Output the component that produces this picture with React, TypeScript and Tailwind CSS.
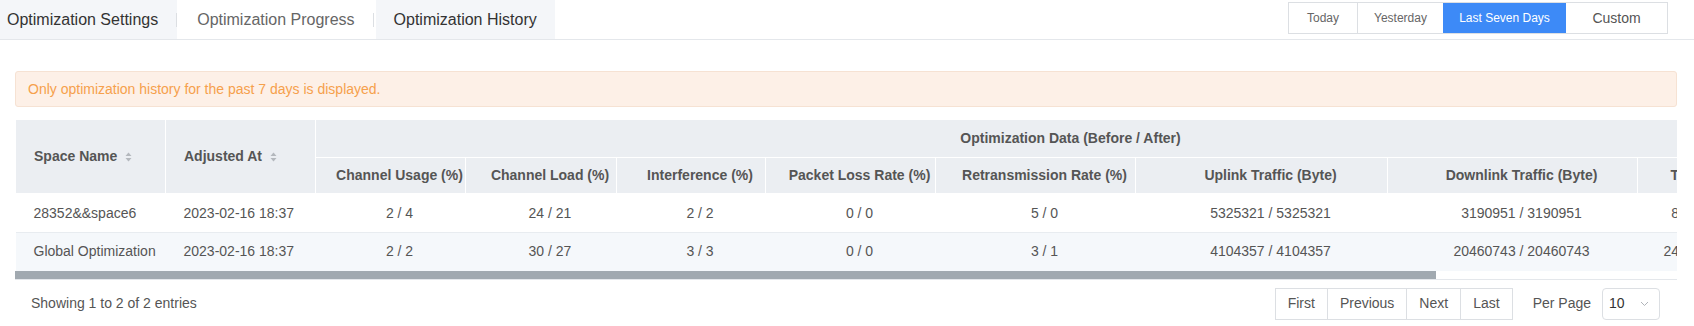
import React from "react";

const SortIcon = () => (
  <svg width="7" height="10" viewBox="0 0 7 10" className="inline-block ml-[8px] align-[-1px]">
    <path d="M3.5 0.5 L6.5 4 L0.5 4 Z" fill="#b4b8bd" />
    <path d="M3.5 9.5 L6.5 6 L0.5 6 Z" fill="#b4b8bd" />
  </svg>
);

const subCols = [
  "Channel Usage (%)",
  "Channel Load (%)",
  "Interference (%)",
  "Packet Loss Rate (%)",
  "Retransmission Rate (%)",
  "Uplink Traffic (Byte)",
  "Downlink Traffic (Byte)",
  "Total Traffic (Byte)",
];

const rows = [
  {
    name: "28352&&space6",
    time: "2023-02-16 18:37",
    vals: ["2 / 4", "24 / 21", "2 / 2", "0 / 0", "5 / 0", "5325321 / 5325321", "3190951 / 3190951", "8516272 / 8516272"],
  },
  {
    name: "Global Optimization",
    time: "2023-02-16 18:37",
    vals: ["2 / 2", "30 / 27", "3 / 3", "0 / 0", "3 / 1", "4104357 / 4104357", "20460743 / 20460743", "24565100 / 24565100"],
  },
];

export default function App() {
  return (
    <div className="w-[1694px] h-[326px] bg-white overflow-hidden" style={{ fontFamily: '"Liberation Sans", Arial, sans-serif' }}>
      {/* top bar */}
      <div className="flex justify-between items-start h-[40px] border-b border-[#e4e7eb] pr-[26px]">
        <div className="flex h-[39px]">
          <div className="flex items-center bg-[#f4f6f9] pl-[7px] text-[16px] text-[#333]">
            <span>Optimization Settings</span>
            <span className="ml-[18px] w-px h-[14px] bg-[#dcdfe3]" />
          </div>
          <div className="flex items-center bg-white pl-[20px] text-[16px] text-[#666]">
            <span>Optimization Progress</span>
            <span className="ml-[18px] mr-[2px] w-px h-[14px] bg-[#dcdfe3]" />
          </div>
          <div className="flex items-center bg-[#f4f6f9] px-[18px] text-[16px] text-[#333]">
            <span>Optimization History</span>
          </div>
        </div>
        <div className="flex mt-[2px] h-[32px] border border-[#dcdfe3]">
          <div className="w-[69px] flex items-center justify-center text-[12px] text-[#666] border-r border-[#dcdfe3]">Today</div>
          <div className="w-[85px] flex items-center justify-center text-[12px] text-[#666]">Yesterday</div>
          <div className="w-[123px] flex items-center justify-center text-[12px] text-white bg-[#3d8af7]">Last Seven Days</div>
          <div className="w-[101px] flex items-center justify-center text-[14px] text-[#555]">Custom</div>
        </div>
      </div>

      <div className="pl-[15px] pr-[17px]">
        {/* alert */}
        <div className="mt-[31px] h-[36px] flex items-center pl-[12px] bg-[#fdf0e7] border border-[#f6e2d3] rounded-[3px] text-[14px] text-[#f6a04c]">
          Only optimization history for the past 7 days is displayed.
        </div>

        {/* table */}
        <div className="mt-[12px] overflow-hidden">
          <table className="table-fixed border-collapse w-[1944px] text-[14px]">
            <colgroup>
              <col className="w-[150px]" />
              <col className="w-[150px]" />
              <col className="w-[150px]" />
              <col className="w-[151px]" />
              <col className="w-[149px]" />
              <col className="w-[170px]" />
              <col className="w-[200px]" />
              <col className="w-[252px]" />
              <col className="w-[250px]" />
              <col className="w-[170px]" />
              <col className="w-[152px]" />
            </colgroup>
            <thead>
              <tr className="h-[38px]">
                <th rowSpan={2} className="bg-[#ebeef2] border border-white text-left pl-[18px] font-bold text-[#555] whitespace-nowrap">
                  Space Name<SortIcon />
                </th>
                <th rowSpan={2} className="bg-[#ebeef2] border border-white text-left pl-[18px] font-bold text-[#555] whitespace-nowrap">
                  Adjusted At<SortIcon />
                </th>
                <th colSpan={8} className="bg-[#ebeef2] border border-white text-center pl-[18px] font-bold text-[#555]">
                  Optimization Data (Before / After)
                </th>
                <th rowSpan={2} className="bg-[#ebeef2] border border-white text-center pl-[18px] font-bold text-[#555]">
                  Operation
                </th>
              </tr>
              <tr className="h-[36px]">
                {subCols.map((c) => (
                  <th key={c} className="bg-[#ebeef2] border border-white text-center pl-[18px] font-bold text-[#555] whitespace-nowrap">
                    {c}
                  </th>
                ))}
              </tr>
            </thead>
            <tbody>
              {rows.map((r, i) => (
                <tr key={r.name} className={i === 0 ? "h-[39px] bg-white border-b border-[#e8ecf0]" : "h-[38px] bg-[#f5f8fb]"}>
                  <td className="pl-[18px] text-[#555] whitespace-nowrap">{r.name}</td>
                  <td className="pl-[18px] text-[#555] whitespace-nowrap">{r.time}</td>
                  {r.vals.map((v, j) => (
                    <td key={j} className="text-center pl-[18px] text-[#555] whitespace-nowrap">{v}</td>
                  ))}
                  <td className="text-center pl-[18px] text-[#3d8af7]">Details</td>
                </tr>
              ))}
            </tbody>
          </table>
          <div className="h-[8px] bg-white">
            <div className="h-[8px] w-[1421px] bg-[#a1a9b0]" />
          </div>
          <div className="h-px bg-[#e4e7eb]" />
        </div>

        {/* footer */}
        <div className="flex items-center justify-between mt-[8px] h-[32px] pl-[16px] pr-[17px] text-[14px] text-[#555]">
          <div>Showing 1 to 2 of 2 entries</div>
          <div className="flex items-center">
            <div className="flex h-[32px] border border-[#dcdfe3]">
              <div className="px-[12px] flex items-center border-r border-[#dcdfe3]">First</div>
              <div className="px-[12px] flex items-center border-r border-[#dcdfe3]">Previous</div>
              <div className="px-[12px] flex items-center border-r border-[#dcdfe3]">Next</div>
              <div className="px-[12px] flex items-center">Last</div>
            </div>
            <div className="ml-[20px]">Per Page</div>
            <div className="ml-[11px] w-[58px] h-[32px] border border-[#dcdfe3] rounded-[4px] flex items-center justify-between pl-[6px] pr-[10px] text-[#333]">
              <span>10</span>
              <svg width="9" height="6" viewBox="0 0 9 6">
                <path d="M1 1 L4.5 4.5 L8 1" stroke="#b0b4b9" strokeWidth="1" fill="none" />
              </svg>
            </div>
          </div>
        </div>
      </div>
    </div>
  );
}
